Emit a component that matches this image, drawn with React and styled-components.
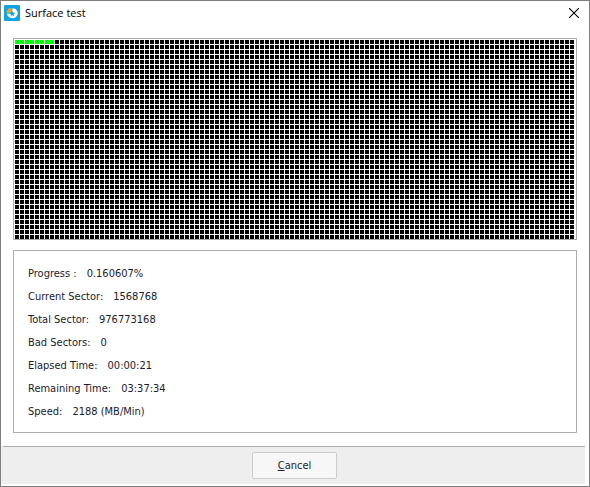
import React from "react";
import styled, { createGlobalStyle } from "styled-components";

const TOTAL_BLOCKS = 4480;
const SCANNED_BLOCKS = 8;

const stats = [
  { label: "Progress :", value: "0.160607%" },
  { label: "Current Sector:", value: "1568768" },
  { label: "Total Sector:", value: "976773168" },
  { label: "Bad Sectors:", value: "0" },
  { label: "Elapsed Time:", value: "00:00:21" },
  { label: "Remaining Time:", value: "03:37:34" },
  { label: "Speed:", value: "2188 (MB/Min)" },
];

const GlobalStyle = createGlobalStyle`
  * {
    box-sizing: border-box;
  }
  body {
    margin: 0;
    background: #fff;
  }
`;

const Window = styled.main`
  display: flex;
  flex-direction: column;
  min-height: 100vh;
  border: 1px solid #7f7f7f;
  background: #fff;
  color: #1b1b2b;
  font-family: "DejaVu Sans Condensed", "DejaVu Sans", sans-serif;
  font-size: 11px;
`;

const TitleBar = styled.header`
  display: flex;
  align-items: center;
  height: 24px;
  padding: 0 8px 0 3px;
`;

const Title = styled.h1`
  flex: 1;
  margin: 0 0 0 5px;
  color: #000;
  font-family: "Open Sans", sans-serif;
  font-size: 11px;
  font-weight: 400;
  line-height: 16px;
`;

const CloseButton = styled.button`
  display: flex;
  padding: 2px;
  border: 0;
  background: none;
`;

const Content = styled.section`
  display: flex;
  flex: 1;
  flex-direction: column;
  gap: 10px;
  padding: 13px 12px;
`;

const Panel = styled.div`
  border: 1px solid #acacac;
`;

const SectorMap = styled(Panel)`
  display: grid;
  grid-template-columns: repeat(auto-fill, 4px);
  grid-auto-rows: 4px;
  gap: 1px;
  padding: 1px 0 0 1px;
`;

const Block = styled.span`
  background: ${({ $scanned }) => ($scanned ? "#00ff00" : "#000")};
`;

const Stats = styled(Panel)`
  flex: 1;
  padding: 11px 14px 9px;
`;

const StatRow = styled.p`
  display: flex;
  gap: 10px;
  margin: 0;
  line-height: 23px;
`;

const Footer = styled.footer`
  margin: 0 4px 2px 0;
  padding-left: 2px;
  background: #eee;
`;

const Actions = styled.div`
  display: flex;
  justify-content: center;
  padding: 5px 0 5px 1px;
  border-top: 1px solid #acacac;
`;

const Button = styled.button`
  width: 85px;
  height: 27px;
  padding: 0;
  border: 1px solid #ccc;
  border-radius: 2px;
  background: #f7f7f7;
  color: #1b1b2b;
  font: inherit;
`;

function Logo() {
  return (
    <svg width="16" height="16" viewBox="0 0 16 16" aria-hidden="true">
      <rect width="16" height="16" rx="1" fill="#0fa5e4" />
      <path
        d="M8.6 3.2C12 3.4 14 5.8 13.7 8.6C13.4 11.6 11 13.4 8.2 13.3C5.3 13.2 3.2 11.2 2.9 8.8L7.8 8.4Z"
        fill="#fff"
      />
      <path d="M8.2 6L9.2 7.6L11 8L9.8 9.3L10 11L8.3 10.3L6.6 11L6.8 9.3L5.6 8L7.4 7.6Z" fill="#0fa5e4" />
      <path d="M7.6 2.8V7.2L2.6 8C2.4 5.3 4.6 2.9 7.6 2.8Z" fill="#f9a51a" />
    </svg>
  );
}

function CloseIcon() {
  return (
    <svg width="10" height="10" viewBox="0 0 10 10" aria-hidden="true">
      <path d="M0 0L10 10M10 0L0 10" stroke="#000" strokeWidth="1.1" />
    </svg>
  );
}

function SectorBlocks() {
  return (
    <SectorMap role="img" aria-label="Disk surface">
      {Array.from({ length: TOTAL_BLOCKS }, (_, i) => (
        <Block key={i} $scanned={i < SCANNED_BLOCKS} />
      ))}
    </SectorMap>
  );
}

export default function App() {
  return (
    <>
      <GlobalStyle />
      <Window>
        <TitleBar>
          <Logo />
          <Title>Surface test</Title>
          <CloseButton aria-label="Close">
            <CloseIcon />
          </CloseButton>
        </TitleBar>
        <Content>
          <SectorBlocks />
          <Stats>
            {stats.map(({ label, value }) => (
              <StatRow key={label}>
                <span>{label}</span>
                <span>{value}</span>
              </StatRow>
            ))}
          </Stats>
        </Content>
        <Footer>
          <Actions>
            <Button>
              <u>C</u>ancel
            </Button>
          </Actions>
        </Footer>
      </Window>
    </>
  );
}
